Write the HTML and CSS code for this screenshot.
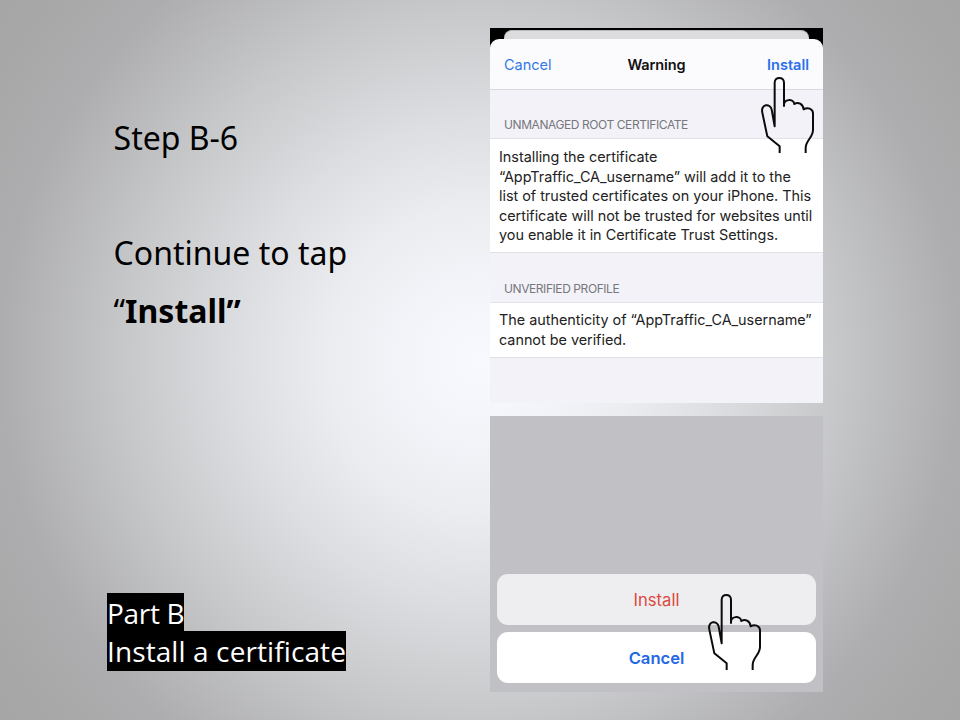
FILE: index.html
```
<!DOCTYPE html>
<html lang="en">
<head>
<meta charset="utf-8">
<title>Step B-6</title>
<link rel="stylesheet" href="styles.css">
</head>
<body>
<svg class="defs" aria-hidden="true">
  <symbol id="hand" viewBox="0 0 270 300">
    <path d="M119 279V259L82 229L67 158C61 132 91 128 95 149L104 199V68C104 49 132 49 132 68V138C130 116 160 115 163 132C174 125 189 131 191 148C202 141 219 145 219 160V210C219 233 197 241 197 264V279"/>
  </symbol>
</svg>
<main class="slide">
  <section class="copy">
    <div class="steps">
      <p>Step B-6</p>
      <p>&nbsp;</p>
      <p>Continue to tap</p>
      <p>“<strong>Install”</strong></p>
    </div>
    <h1 class="part"><span class="first">Part B</span><span>Install a certificate</span></h1>
  </section>
  <section class="phones">
    <div class="warning">
      <div class="behind"></div>
      <header class="bar">
        <span class="cancel">Cancel</span>
        <span class="title">Warning</span>
        <span class="install">Install</span>
      </header>
      <h2 class="label label-root"><span>UNMANAGED ROOT CERTIFICATE</span></h2>
      <div class="cell cell-root">
        <div>Installing the certificate</div>
        <div>“AppTraffic_CA_username” will add it to the</div>
        <div>list of trusted certificates on your iPhone. This</div>
        <div>certificate will not be trusted for websites until</div>
        <div>you enable it in Certificate Trust Settings.</div>
      </div>
      <h2 class="label label-profile"><span>UNVERIFIED PROFILE</span></h2>
      <div class="cell cell-profile">
        <div>The authenticity of “AppTraffic_CA_username”</div>
        <div>cannot be verified.</div>
      </div>
      <svg class="hand hand-top"><use href="#hand"/></svg>
    </div>
    <div class="sheet">
      <div class="action destructive">Install</div>
      <div class="action dismiss">Cancel</div>
      <svg class="hand hand-bottom"><use href="#hand"/></svg>
    </div>
  </section>
</main>
</body>
</html>
```
FILE: styles.css
```
* { box-sizing: border-box; }
body { margin: 0; }
p, h1, h2 { margin: 0; font-weight: 400; }
.defs { display: none; }
.slide {
  width: 960px;
  height: 720px;
  overflow: hidden;
  display: grid;
  grid-template-columns: 490px 333px;
  background: radial-gradient(circle 600px at 480px 360px, #f8f9fe 0%, #f5f6fb 9%, #ecedf1 25%, #dddee1 40%, #c7c8ca 59%, #adadaf 80%, #a5a5a5 100%);
}
.copy {
  padding: 109px 0 49px 107px;
  display: flex;
  flex-direction: column;
  justify-content: space-between;
}
.steps {
  padding-left: 6.6px;
  font: 32px/57.6px "Noto Sans", sans-serif;
  color: #000;
}
.steps strong { font-weight: 700; }
.part {
  display: flex;
  flex-direction: column;
  align-items: flex-start;
  font: 28px/40px "Open Sans", sans-serif;
  letter-spacing: 0.1px;
  color: #fff;
}
.part span { height: 40px; background: #000; white-space: nowrap; }
.part .first { height: 38px; letter-spacing: -0.3px; }
.phones { padding-top: 28px; font-family: Inter, sans-serif; }
.warning {
  position: relative;
  height: 375px;
  background: #f2f2f8;
}
.behind {
  height: 22px;
  padding: 2px 14px 0;
  background: #000;
}
.behind::before {
  content: "";
  display: block;
  height: 20px;
  border-radius: 8px 8px 0 0;
  border-top: 1px solid #bbb;
  background: #dcdcde;
}
.bar {
  position: relative;
  height: 51px;
  margin-top: -11px;
  padding: 0 14px;
  display: grid;
  grid-template-columns: 1fr auto 1fr;
  align-items: center;
  border-radius: 9px 9px 0 0;
  border-bottom: 1px solid #d8d8dd;
  background: #fbfbfe;
  font-size: 14.5px;
  color: #111;
}
.bar .cancel { color: #3478e6; }
.bar .title { font-weight: 600; letter-spacing: -0.1px; }
.bar .install { color: #2a70e8; font-weight: 600; text-align: right; }
.label {
  padding-left: 14px;
  display: flex;
  align-items: flex-end;
  font-size: 12px;
  line-height: 14px;
  letter-spacing: -0.42px;
  color: #77777c;
  white-space: nowrap;
}
.label-root { height: 48px; padding-bottom: 6px; }
.label-profile { height: 49px; padding-bottom: 6px; }
.cell {
  padding: 8px 9px 0;
  background: #fff;
  border-top: 1px solid #e2e2e7;
  border-bottom: 1px solid #e0e0e5;
  font-size: 14.4px;
  line-height: 19.6px;
  letter-spacing: -0.02px;
  white-space: nowrap;
  color: #222;
}
.cell-root { height: 115px; }
.cell-profile { height: 56px; padding-top: 7.4px; }
.sheet {
  position: relative;
  height: 276px;
  margin-top: 13px;
  padding: 0 7px 9px;
  display: flex;
  flex-direction: column;
  justify-content: flex-end;
  gap: 7px;
  background: #c1c0c5;
}
.action {
  height: 51px;
  border-radius: 11px;
  text-align: center;
  font-size: 16.6px;
  line-height: 52px;
}
.destructive { background: #eeeef1; color: #db4a3d; }
.dismiss { background: #fff; color: #2468e5; font-weight: 600; }
.hand {
  position: absolute;
  width: 90px;
  height: 100px;
  fill: none;
  stroke: #0b0b0b;
  stroke-width: 6;
  stroke-linejoin: round;
}
.hand-top { left: 250px; top: 32px; }
.hand-bottom { left: 197px; top: 161px; }
```
